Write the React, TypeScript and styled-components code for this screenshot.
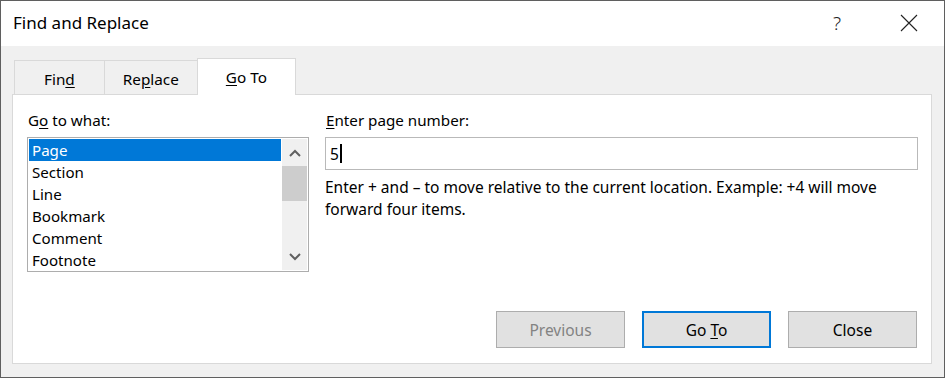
import styled, { createGlobalStyle } from "styled-components";

const GlobalStyle = createGlobalStyle`
  html, body {
    margin: 0;
    padding: 0;
    background: #ffffff;
  }
  body {
    font-family: "Noto Sans", "Open Sans", sans-serif;
    color: #000000;
  }
`;

const Window = styled.div`
  width: 945px;
  height: 378px;
  box-sizing: border-box;
  border: 1px solid #5f5f5f;
  display: flex;
  flex-direction: column;
  background: #f0f0f0;
`;

const TitleBar = styled.div`
  height: 45px;
  background: #ffffff;
  display: flex;
  align-items: center;
  padding-left: 12px;
`;

const Title = styled.div`
  font-size: 17px;
  flex: 1;
  margin-top: -2px;
`;

const HelpButton = styled.div`
  width: 30px;
  text-align: center;
  font-size: 19px;
  font-weight: 300;
  color: #222;
  margin-right: 48px;
  margin-top: -2px;
`;

const CloseButton = styled.div`
  width: 18px;
  height: 18px;
  margin-right: 26px;
  margin-top: -2px;
  display: flex;
`;

const Body = styled.div`
  flex: 1;
  display: flex;
  flex-direction: column;
  padding: 12px 12px 13px 11px;
`;

const TabStrip = styled.div`
  display: flex;
  align-items: flex-end;
  height: 36px;
  padding-left: 2px;
`;

const Tab = styled.div<{ $active?: boolean; $pad?: number }>`
  box-sizing: border-box;
  height: ${(p) => (p.$active ? "37px" : "34px")};
  margin-bottom: ${(p) => (p.$active ? "-1px" : "0")};
  padding: 0 ${(p) => p.$pad ?? 29}px;
  display: flex;
  align-items: center;
  justify-content: center;
  font-size: 15.3px;
  background: ${(p) => (p.$active ? "#ffffff" : "#f0f0f0")};
  border: 1px solid #d9d9d9;
  border-bottom: none;
  margin-right: -1px;
  position: relative;
  z-index: ${(p) => (p.$active ? 2 : 1)};
  padding-top: ${(p) => (p.$active ? "0" : "3px")};
`;

const Panel = styled.div`
  flex: 1;
  background: #ffffff;
  border: 1px solid #d9d9d9;
  display: flex;
  flex-direction: column;
  padding: 14px 13px 15px 14px;
`;

const Columns = styled.div`
  display: flex;
  gap: 16px;
`;

const LeftColumn = styled.div`
  width: 282px;
  display: flex;
  flex-direction: column;
`;

const RightColumn = styled.div`
  flex: 1;
  display: flex;
  flex-direction: column;
`;

const Label = styled.div`
  font-size: 15.2px;
  height: 22px;
  line-height: 22px;
  margin-bottom: 6px;
  margin-left: 1px;
`;

const U = styled.span`
  text-decoration: underline;
  text-underline-offset: 2px;
  text-decoration-thickness: 1px;
`;

const ListBox = styled.div`
  box-sizing: border-box;
  height: 135px;
  border: 1px solid #adadad;
  display: flex;
  padding: 1px;
`;

const Items = styled.div`
  flex: 1;
  display: flex;
  flex-direction: column;
`;

const Item = styled.div<{ $selected?: boolean }>`
  height: 22px;
  line-height: 22px;
  font-size: 15.1px;
  padding-left: 3px;
  background: ${(p) => (p.$selected ? "#0078d7" : "transparent")};
  color: ${(p) => (p.$selected ? "#ffffff" : "#000000")};
`;

const ScrollBar = styled.div`
  width: 25px;
  margin-left: 1px;
  background: #f0f0f0;
  display: flex;
  flex-direction: column;
`;

const ScrollArrow = styled.div`
  height: 27px;
  display: flex;
  align-items: center;
  justify-content: center;
`;

const Thumb = styled.div`
  height: 35px;
  background: #cdcdcd;
`;

const Track = styled.div`
  flex: 1;
`;

const Input = styled.div`
  box-sizing: border-box;
  height: 33px;
  border: 1px solid #b9b9b9;
  display: flex;
  align-items: center;
  padding-left: 4px;
  font-size: 15.5px;
`;

const Caret = styled.span`
  display: inline-block;
  width: 2px;
  height: 19px;
  background: #000;
  margin-left: 1px;
`;

const Hint = styled.div`
  font-size: 15.5px;
  line-height: 22px;
  margin-top: 6px;
  padding-right: 20px;
`;

const ButtonRow = styled.div`
  margin-top: auto;
  display: flex;
  justify-content: flex-end;
  gap: 17px;
  padding-right: 1px;
`;

const Button = styled.div<{ $disabled?: boolean; $default?: boolean }>`
  box-sizing: border-box;
  width: 129px;
  height: 37px;
  display: flex;
  align-items: center;
  justify-content: center;
  font-size: 15.5px;
  background: #e1e1e1;
  border: ${(p) => (p.$default ? "2px solid #0078d7" : "1px solid #adadad")};
  color: ${(p) => (p.$disabled ? "#838383" : "#000000")};
`;

const Chevron = ({ up }: { up?: boolean }) => (
  <svg width="12" height="8" viewBox="0 0 12 8">
    <path
      d={up ? "M1 7 L6 2 L11 7" : "M1 1 L6 6 L11 1"}
      stroke="#606060"
      strokeWidth="2"
      fill="none"
    />
  </svg>
);

const items = ["Page", "Section", "Line", "Bookmark", "Comment", "Footnote"];

export default function App() {
  return (
    <>
      <GlobalStyle />
      <Window>
        <TitleBar>
          <Title>Find and Replace</Title>
          <HelpButton>?</HelpButton>
          <CloseButton>
            <svg width="18" height="18" viewBox="0 0 18 18">
              <path d="M1 1 L17 17 M17 1 L1 17" stroke="#222" strokeWidth="1.1" fill="none" />
            </svg>
          </CloseButton>
        </TitleBar>
        <Body>
          <TabStrip>
            <Tab $pad={29}>
              <span>
                Fin<U>d</U>
              </span>
            </Tab>
            <Tab $pad={18}>
              <span>
                Re<U>p</U>lace
              </span>
            </Tab>
            <Tab $active $pad={28}>
              <span>
                <U>G</U>o To
              </span>
            </Tab>
          </TabStrip>
          <Panel>
            <Columns>
              <LeftColumn>
                <Label>
                  G<U>o</U> to what:
                </Label>
                <ListBox>
                  <Items>
                    {items.map((it, i) => (
                      <Item key={it} $selected={i === 0}>
                        {it}
                      </Item>
                    ))}
                  </Items>
                  <ScrollBar>
                    <ScrollArrow>
                      <Chevron up />
                    </ScrollArrow>
                    <Thumb />
                    <Track />
                    <ScrollArrow>
                      <Chevron />
                    </ScrollArrow>
                  </ScrollBar>
                </ListBox>
              </LeftColumn>
              <RightColumn>
                <Label>
                  <U>E</U>nter page number:
                </Label>
                <Input>
                  5<Caret />
                </Input>
                <Hint>
                  Enter + and – to move relative to the current location. Example: +4 will move
                  forward four items.
                </Hint>
              </RightColumn>
            </Columns>
            <ButtonRow>
              <Button $disabled>Previous</Button>
              <Button $default>
                <span>
                  Go <U>T</U>o
                </span>
              </Button>
              <Button>Close</Button>
            </ButtonRow>
          </Panel>
        </Body>
      </Window>
    </>
  );
}
